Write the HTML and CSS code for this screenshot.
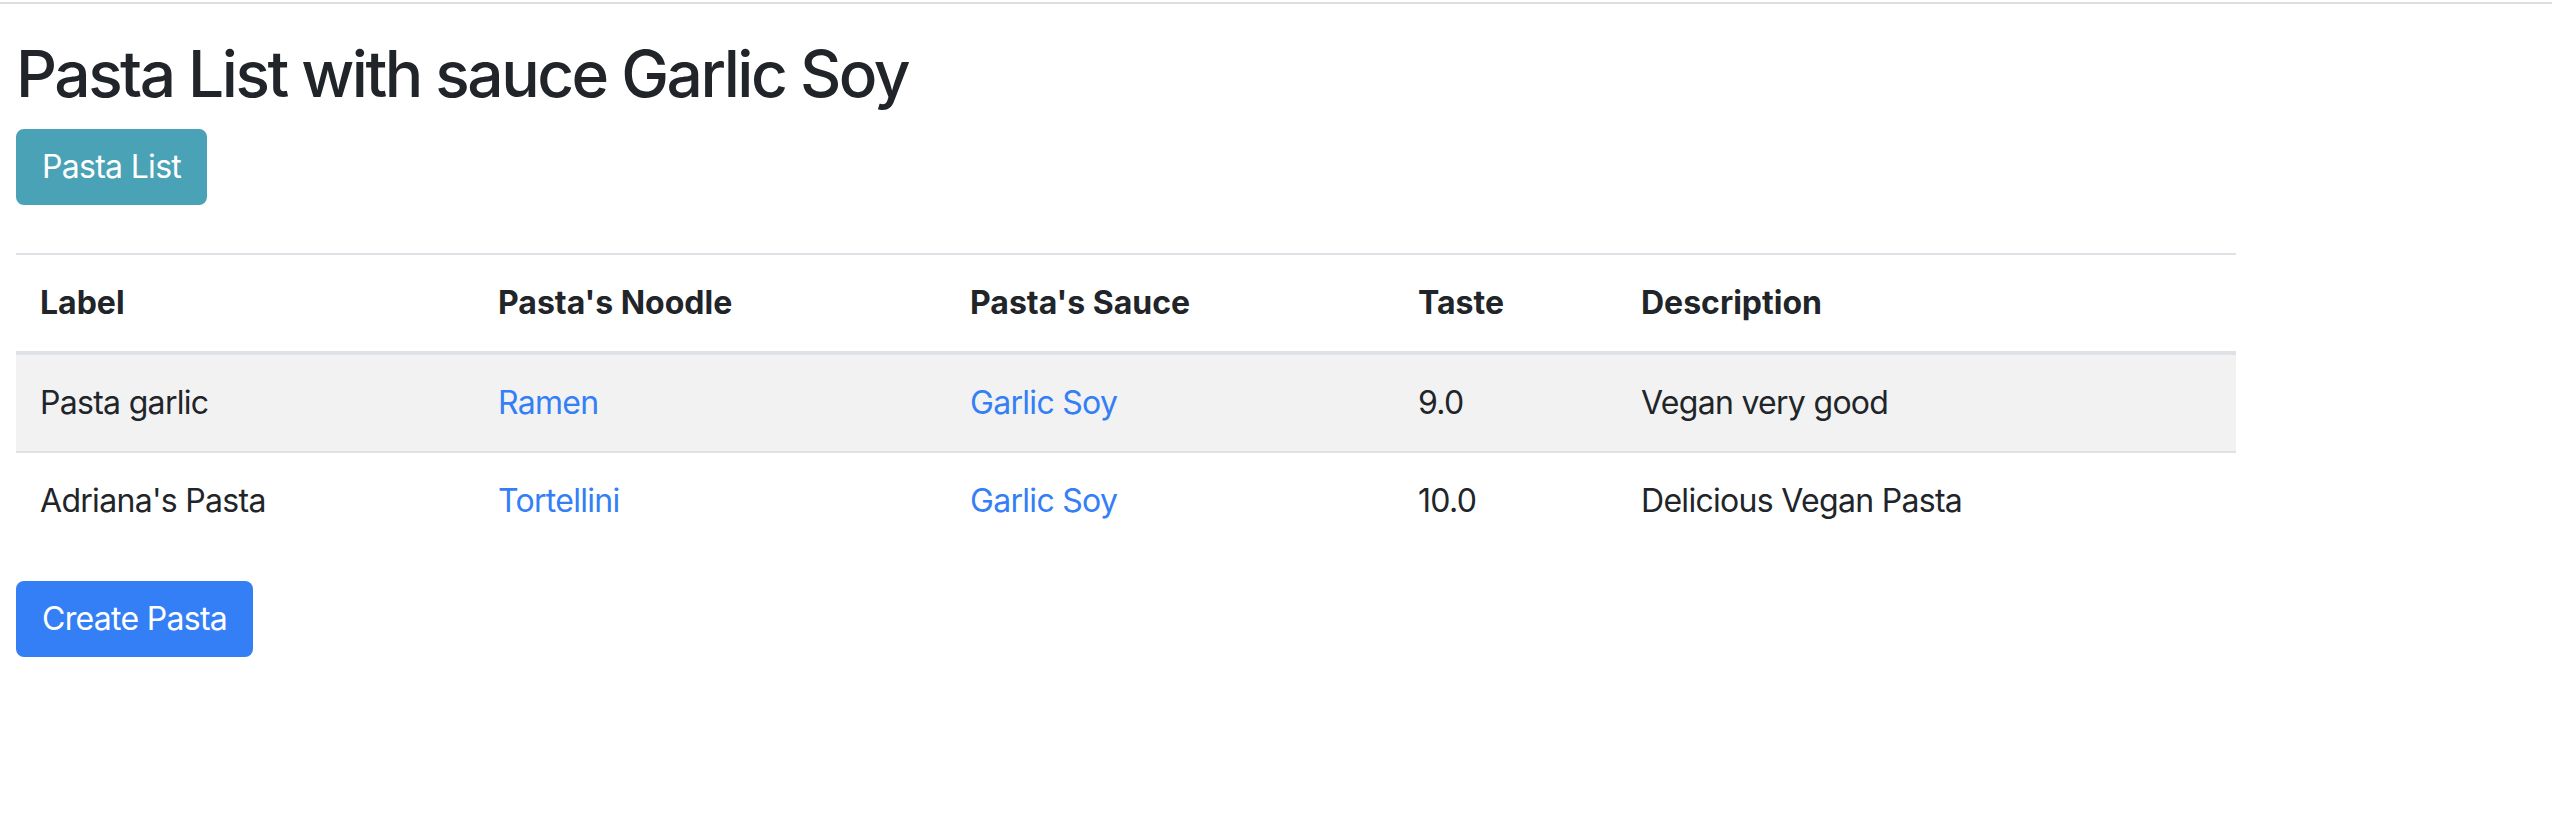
FILE: index.html
```html
<!DOCTYPE html>
<html lang="en">
<head>
<meta charset="utf-8">
<title>Pasta List with sauce Garlic Soy</title>
<link rel="stylesheet" href="styles.css">
</head>
<body>
<div class="topline"></div>
<main class="page">
  <h2 class="title">Pasta List with sauce Garlic Soy</h2>
  <a class="btn btn-info" href="#">Pasta List</a>
  <table class="table">
    <thead>
      <tr>
        <th class="c-label">Label</th>
        <th class="c-noodle">Pasta's Noodle</th>
        <th class="c-sauce">Pasta's Sauce</th>
        <th class="c-taste">Taste</th>
        <th class="c-desc">Description</th>
      </tr>
    </thead>
    <tbody>
      <tr class="odd">
        <td>Pasta garlic</td>
        <td><a href="#">Ramen</a></td>
        <td><a href="#">Garlic Soy</a></td>
        <td>9.0</td>
        <td>Vegan very good</td>
      </tr>
      <tr>
        <td>Adriana's Pasta</td>
        <td><a href="#">Tortellini</a></td>
        <td><a href="#">Garlic Soy</a></td>
        <td>10.0</td>
        <td>Delicious Vegan Pasta</td>
      </tr>
    </tbody>
  </table>
  <a class="btn btn-primary" href="#">Create Pasta</a>
</main>
</body>
</html>
```

FILE: styles.css
```css
html, body {
  margin: 0;
  padding: 0;
  background: #fff;
}
body {
  font-family: Inter, "Liberation Sans", Arial, sans-serif;
  font-size: 32px;
  line-height: 1.5;
  color: #212529;
  letter-spacing: -0.7px;
}
.topline {
  height: 2px;
  margin-top: 2px;
  background: #dedede;
}
.page {
  padding: 32px 16px 0 16px;
}
.title {
  margin: 0 0 16px 0;
  font-size: 64px;
  font-weight: 500;
  line-height: 1.2;
  letter-spacing: -2.5px;
}
.btn {
  display: inline-block;
  padding: 12px 24px;
  font-size: 32px;
  line-height: 48px;
  border: 2px solid transparent;
  border-radius: 8px;
  color: #fff;
  text-decoration: none;
  vertical-align: top;
}
.btn-info {
  background: #4aa2b7;
  border-color: #4aa2b7;
}
.btn-primary {
  background: #347ff6;
  border-color: #347ff6;
}
.table {
  width: 2220px;
  margin: 48px 0 32px 0;
  border-collapse: collapse;
  color: #212529;
}
.table th,
.table td {
  padding: 24px;
  text-align: left;
  vertical-align: top;
  line-height: 48px;
}
.table th {
  font-weight: 700;
  letter-spacing: 0;
  border-top: 2px solid #dee2e6;
  border-bottom: 4px solid #dee2e6;
}
.table td {
  border-top: 2px solid #dee2e6;
}
.table tr.odd td {
  background: #f2f2f2;
}
.table a {
  color: #347ff6;
  text-decoration: none;
}
.c-label { width: 410px; }
.c-noodle { width: 424px; }
.c-sauce { width: 400px; }
.c-taste { width: 175px; }
.c-desc { width: auto; }
```
